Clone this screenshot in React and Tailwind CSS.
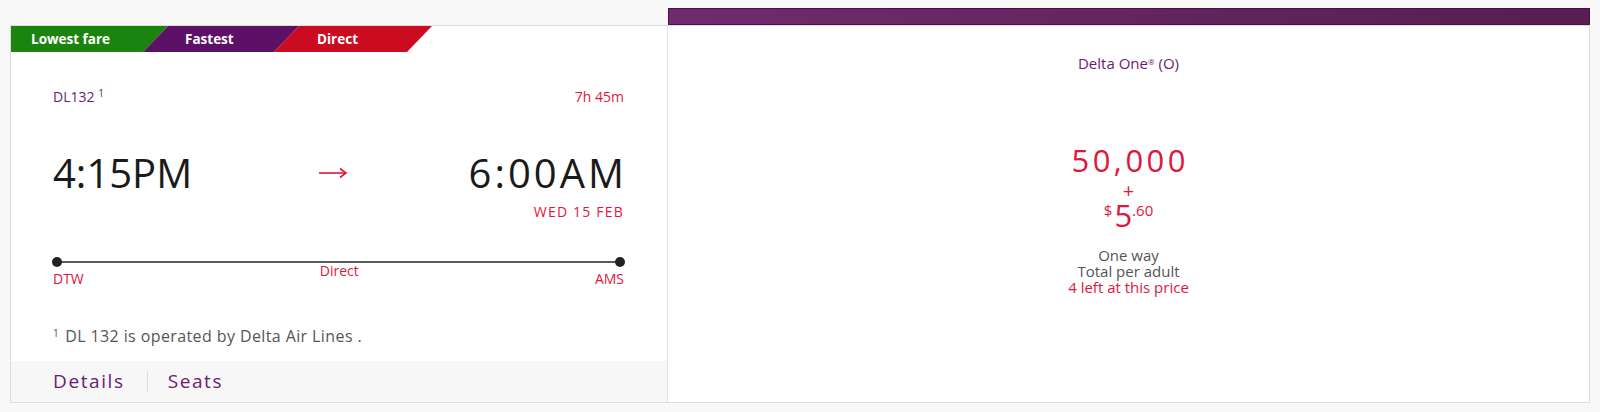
import React from 'react';

const font = { fontFamily: '"Open Sans", "Liberation Sans", sans-serif' };

const Badges = () => (
  <div className="flex h-[26px] text-[13.5px] font-bold text-white leading-[26px]">
    <div className="w-[157px] pl-[20px] bg-[#1b840f] [clip-path:polygon(0_0,100%_0,calc(100%_-_25px)_100%,0_100%)]">
      Lowest fare
    </div>
    <div className="w-[156px] -ml-[25px] pl-[42px] bg-[#5c1066] [clip-path:polygon(25px_0,100%_0,calc(100%_-_25px)_100%,0_100%)]">
      Fastest
    </div>
    <div className="w-[158px] -ml-[25px] pl-[43px] bg-[#cb0b1f] [clip-path:polygon(25px_0,100%_0,calc(100%_-_25px)_100%,0_100%)]">
      Direct
    </div>
  </div>
);

const Arrow = () => (
  <svg width="28" height="12" viewBox="0 0 28 12" fill="none" stroke="#e1163c" strokeWidth="1.6">
    <path d="M0 6H27" />
    <path d="M21 1.5L27 6L21 10.5" />
  </svg>
);

const FlightInfo = () => (
  <div className="w-[657px] border-r border-[#e3e3e8] flex flex-col">
    <Badges />
    <div className="px-[42px] pr-[43px]">
      <div className="mt-[35px] flex justify-between text-[14px] leading-[20px]">
        <span className="text-[#6a1b74]">
          DL132 <sup className="text-[10px]">1</sup>
        </span>
        <span className="text-[#e1163c]">7h 45m</span>
      </div>

      <div className="mt-[46px] grid grid-cols-[1fr_auto_1fr] items-center text-[40px] leading-[40px] text-[#1a1a1a]">
        <span>4:15PM</span>
        <span className="mr-[12px]">
          <Arrow />
        </span>
        <span className="text-right tracking-[3px] -mr-[3px]">6:00AM</span>
      </div>
      <div className="mt-[9px] text-right text-[14px] leading-[20px] tracking-[1.2px] text-[#e1163c]">
        WED 15 FEB
      </div>

      <div className="mt-[35px] relative h-[10px] -mx-[1px]">
        <div className="absolute left-[5px] right-[5px] top-[4px] h-[2px] bg-[#5a5a5a]" />
        <div className="absolute left-0 top-0 w-[10px] h-[10px] rounded-full bg-[#222]" />
        <div className="absolute right-0 top-0 w-[10px] h-[10px] rounded-full bg-[#222]" />
      </div>
      <div className="-mt-[6px] flex justify-between items-start text-[14px] leading-[20px] text-[#e1163c]">
        <span className="mt-[8px]">DTW</span>
        <span>Direct</span>
        <span className="mt-[8px]">AMS</span>
      </div>

      <p className="mt-[36px] text-[16px] leading-[22px] tracking-[0.4px] text-[#555]">
        <sup className="text-[10px] mr-[6px]">1</sup>DL 132 is operated by Delta Air Lines .
      </p>
    </div>

    <div className="mt-auto h-[41px] bg-[#f7f7f7] flex items-center pl-[42px] text-[19px] tracking-[1.6px] text-[#6a1b74]">
      <span>Details</span>
      <span className="ml-[22px] mr-[20px] w-px h-[21px] bg-[#dcdcdc]" />
      <span>Seats</span>
    </div>
  </div>
);

const FarePanel = () => (
  <div className="flex-1 flex flex-col items-center pt-[27px]">
    <div className="text-[15px] leading-[20px] text-[#6a1b74]">
      Delta One<sup className="text-[8px]">®</sup> (O)
    </div>
    <div className="mt-[72px] text-[31px] leading-[30px] tracking-[3.5px] pl-[3.5px] text-[#e1163c]">
      50,000
    </div>
    <div className="mt-[7px] text-[20px] leading-[18px] text-[#e1163c]">+</div>
    <div className="flex items-start text-[#e1163c]">
      <span className="mt-[3px] mr-[2px] text-[15px] leading-[15px]">$</span>
      <span className="text-[31px] leading-[30px]">5</span>
      <span className="mt-[3px] text-[15px] leading-[15px]">.60</span>
    </div>
    <div className="mt-[17px] text-center text-[15px] leading-[16px]">
      <div className="text-[#555]">One way</div>
      <div className="text-[#555]">Total per adult</div>
      <div className="text-[#e1163c]">4 left at this price</div>
    </div>
  </div>
);

export default function App() {
  return (
    <div className="min-h-[412px] bg-[#f8f8f8] px-[10px] pt-[8px]" style={font}>
      <div className="flex">
        <div className="w-[658px]" />
        <div className="flex-1 h-[17px] border border-[#4a0f45] bg-gradient-to-r from-[#6f2c6d] to-[#581d52]" />
      </div>
      <div className="flex h-[378px] bg-white border border-[#dcdcdc]">
        <FlightInfo />
        <FarePanel />
      </div>
    </div>
  );
}
